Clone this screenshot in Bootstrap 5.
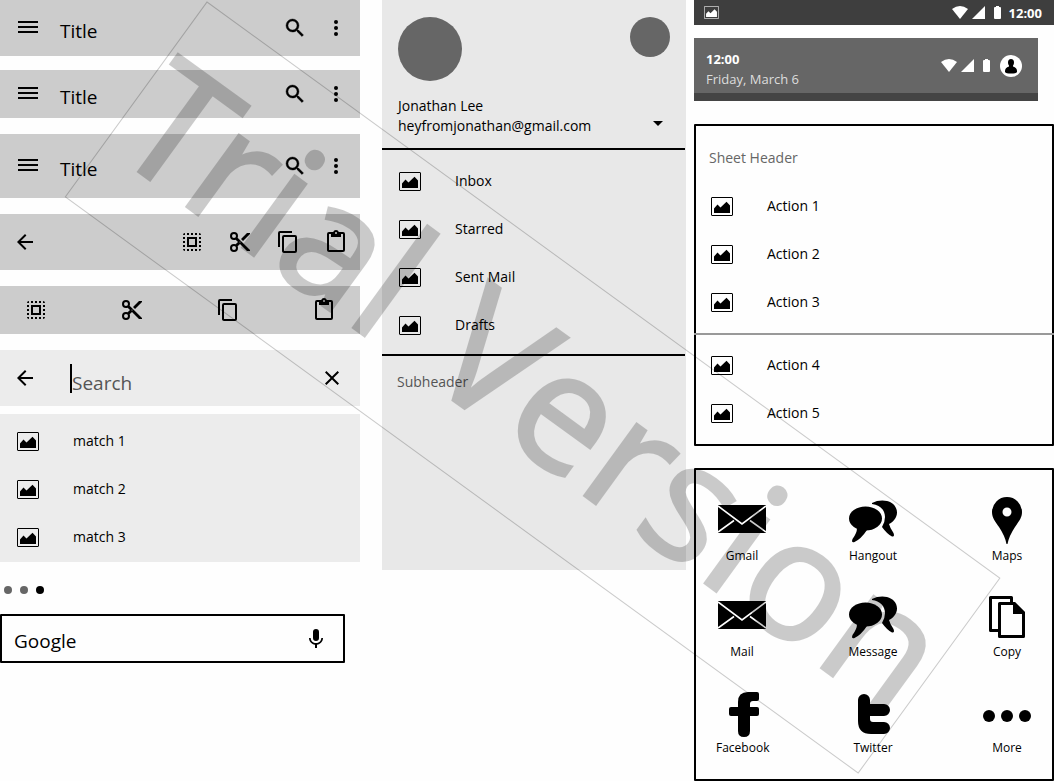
<!DOCTYPE html>
<html lang="en">
<head>
<meta charset="utf-8">
<meta name="viewport" content="width=device-width, initial-scale=1">
<title>Mobile components</title>
<link href="https://cdn.jsdelivr.net/npm/bootstrap@5.3.0/dist/css/bootstrap.min.css" rel="stylesheet">
<style>
  body { font-family: "Open Sans", "Noto Sans", sans-serif; font-size: 14px; line-height: 20px; color: #000; background: #fefefe; overflow-x: hidden; }
  svg { display: block; flex: none; fill: currentColor; }
  a { color: inherit; text-decoration: none; }
  .board { display: grid; grid-template-columns: 360fr 22px 304fr 8px 360fr; align-items: start; }
  .pane-bars { grid-column: 1; }
  .pane-drawer { grid-column: 3; background: #e8e8e8; min-height: 570px; }
  .pane-sheets { grid-column: 5; }
  .tool { background: none; border: 0; padding: 0; color: #000; }
  .bar { background: #ccc; height: 56px; padding: 0 12px 0 16px; margin-bottom: 16px; }
  .bar-short { height: 48px; }
  .bar-tall { height: 64px; }
  .bar-first { margin-bottom: 14px; }
  .bar-edit { padding-left: 13px; }
  .bar-title { font-size: 19px; line-height: 28px; padding-top: 6px; margin: 0 0 0 20px; font-weight: 400; }
  .tools { gap: 17px; }
  .bar-search { background: #ececec; padding: 0 16px 0 13px; margin-bottom: 8px; }
  .caret-line { width: 2px; height: 29px; background: #000; margin-left: 33px; }
  .field { border: 0; background: none; outline: 0; min-width: 0; font-size: 19px; line-height: 28px; padding: 10px 0 0; color: #000; }
  .field::placeholder { color: #555; opacity: 1; }
  .field-google::placeholder { color: #000; }
  .rows { margin: 0; }
  .rows a { display: flex; align-items: center; height: 48px; padding-left: 17px; gap: 34px; }
  .rows svg { margin-top: 1px; }
  .matches { background: #ececec; padding: 3px 0 1px; }
  .folders { padding: 7px 0 5px; }
  .dot { width: 8px; height: 8px; border-radius: 50%; background: #666; border: 0; padding: 0; }
  .dot-on { background: #000; }
  .pager { gap: 8px; padding: 24px 4px 20px; }
  .google { border: 2px solid #000; border-radius: 1px; margin-right: 15px; height: 49px; padding: 0 15px 0 12px; }
  .google .field { padding-top: 4px; }
  .avatar { width: 64px; height: 64px; border-radius: 50%; background: #666; }
  .avatar-small { width: 40px; height: 40px; }
  .account { padding: 17px 16px 12px; }
  .account-text { padding-top: 15px; }
  .rule { height: 2px; background: #000; margin-right: 1px; }
  .subhead { color: #555; padding: 16px 15px; margin: 0; }
  .status { background: #3e3e3e; color: #fff; height: 25px; padding: 0 12px 0 10px; font-size: 13px; }
  .signals { gap: 4px; }
  .signals .cell-battery { margin-left: 5px; }
  .shade { background: #666; color: #fff; border-bottom: 8px solid #444; height: 63px; margin: 13px 16px 23px 0; padding: 0 16px 0 12px; gap: 10px; font-size: 13px; }
  .shade-text { padding-top: 6px; }
  .shade-date { color: #ddd; }
  .sheet { border: 2px solid #000; border-radius: 1px; padding-bottom: 7px; }
  .sheet-head { color: #666; font-size: 14px; font-weight: 400; line-height: 20px; padding: 22px 13px 14px; margin: 0; }
  .sheet .rows a { padding-left: 15px; }
  .sheet-rule { height: 2px; background: #999; margin: 7px -2px 6px; }
  .apps { border: 2px solid #000; border-radius: 1px; margin-top: 22px; padding: 25px 0 23px 20px; display: grid; grid-template-columns: 131fr 134fr 71fr; row-gap: 27px; font-size: 12px; line-height: 16px; }
  .app-tile { width: 52px; text-align: center; white-space: nowrap; }
  .app-tile svg { margin: 0 2px 3px; }
  .stamp { position: absolute; left: 0; top: 0; pointer-events: none; opacity: .2; font-family: "Noto Sans", sans-serif; }
</style>
</head>
<body>
<svg width="0" height="0" class="position-absolute" aria-hidden="true">
  <symbol id="menu" viewBox="0 0 24 24"><path d="M2 5h20v2H2zM2 10h20v2H2zM2 15h20v2H2z"/></symbol>
  <symbol id="search" viewBox="0 0 24 24"><path d="M15.500 14h-.79l-.28-.27A6.47 6.47 0 0 0 16 9.500 6.500 6.500 0 1 0 9.500 16c1.610 0 3.090-.59 4.230-1.570l.27.28v.79l5 4.990L20.490 19zm-6 0a4.500 4.500 0 1 1 0-9 4.500 4.500 0 0 1 0 9z" stroke="currentColor" stroke-width=".4"/></symbol>
  <symbol id="more" viewBox="0 0 24 24"><circle cx="12" cy="6" r="2"/><circle cx="12" cy="12" r="2"/><circle cx="12" cy="18" r="2"/></symbol>
  <symbol id="back" viewBox="0 0 24 24"><path d="M20 11H7.830l5.590-5.590L12 4l-8 8 8 8 1.410-1.410L7.830 13H20z"/></symbol>
  <symbol id="close" viewBox="0 0 24 24"><path d="M19 6.410L17.590 5 12 10.590 6.410 5 5 6.410 10.590 12 5 17.590 6.410 19 12 13.410 17.590 19 19 17.590 13.410 12z"/></symbol>
  <symbol id="all" viewBox="0 0 24 24"><path d="M3 5h2V3a2 2 0 0 0-2 2zm0 8h2v-2H3zm4 8h2v-2H7zM3 9h2V7H3zm10-6h-2v2h2zm6 0v2h2a2 2 0 0 0-2-2zM5 21v-2H3c0 1.100.9 2 2 2zm-2-4h2v-2H3zM9 3H7v2h2zm2 18h2v-2h-2zm8-8h2v-2h-2zm0 8a2 2 0 0 0 2-2h-2zm0-12h2V7h-2zm0 8h2v-2h-2zm-4 4h2v-2h-2zm0-16h2V3h-2zM7 17h10V7H7zm2-8h6v6H9z"/></symbol>
  <symbol id="cut" viewBox="0 0 24 24"><path d="M9.640 7.640c.23-.5.36-1.050.36-1.640a4 4 0 1 0-4 4c.59 0 1.140-.13 1.640-.36L10 12l-2.360 2.360A3.950 3.950 0 0 0 6 14a4 4 0 1 0 4 4c0-.59-.13-1.140-.36-1.640L12 14l7 7h3v-1zM6 8a2 2 0 1 1 0-4 2 2 0 0 1 0 4zm0 12a2 2 0 1 1 0-4 2 2 0 0 1 0 4zm6-7.500a.5.5 0 1 1 0-1 .5.5 0 0 1 0 1zM19 3l-6 6 2 2 7-7V3z"/></symbol>
  <symbol id="copy" viewBox="0 0 24 24"><path d="M16 1H4a2 2 0 0 0-2 2v14h2V3h12zm3 4H8a2 2 0 0 0-2 2v14c0 1.100.9 2 2 2h11a2 2 0 0 0 2-2V7a2 2 0 0 0-2-2zm0 16H8V7h11z"/></symbol>
  <symbol id="paste" viewBox="0 0 24 24"><path d="M19 2h-4.180a3 3 0 0 0-5.640 0H5a2 2 0 0 0-2 2v16c0 1.100.9 2 2 2h14a2 2 0 0 0 2-2V4a2 2 0 0 0-2-2zm-7 0a1 1 0 1 1 0 2 1 1 0 0 1 0-2zm7 18H5V4h2v3h10V4h2z"/></symbol>
  <symbol id="mic" viewBox="0 0 24 24"><path d="M12 14a3 3 0 0 0 3-3V5a3 3 0 0 0-6 0v6a3 3 0 0 0 3 3zm5.300-3c0 3-2.540 5.100-5.300 5.100S6.700 14 6.700 11H5c0 3.410 2.720 6.230 6 6.720V21h2v-3.280c3.280-.48 6-3.300 6-6.720z"/></symbol>
  <symbol id="photo" viewBox="0 0 22 19"><rect x=".5" y=".5" width="21" height="18" rx=".5" fill="none" stroke="currentColor"/><path d="M3 16v-4.500L6.500 7.500 9.500 10.500 15.500 4.700 19 8.500V16z"/></symbol>
  <symbol id="wifi" viewBox="0 0 16 13"><path d="M0 3Q8-3 16 3L8 13z"/></symbol>
  <symbol id="cell" viewBox="0 0 13 13"><path d="M0 13L13 0v13z"/></symbol>
  <symbol id="battery" viewBox="0 0 7 13"><path d="M2 0h3v1h1q1 0 1 1v10q0 1-1 1H1q-1 0-1-1V2q0-1 1-1h1z"/></symbol>
  <symbol id="person" viewBox="0 0 22 22"><circle cx="11" cy="11" r="11" fill="#fff"/><g fill="#000"><ellipse cx="11" cy="7.500" rx="3" ry="3.500"/><path d="M9 10h4v1.500q4 1 4 4.500v1q-1 1.500-6 1.500T5 17v-1q0-3.500 4-4.500z"/></g></symbol>
  <symbol id="mail" viewBox="0 0 48 50"><path d="M0 10h48v28H0z"/><path d="M0 11L24 29 48 11M0 37L16 25.500M48 37L32 25.500" fill="none" stroke="#fefefe" stroke-width="1.600"/></symbol>
  <symbol id="chat" viewBox="0 0 48 50"><ellipse cx="16.500" cy="23.500" rx="16.500" ry="12"/><path d="M8 33Q8 38 3.500 44 2 48 5.500 47 12 44 18 35z"/><path d="M23 8Q30 4.500 38 6C44 7.500 48 12 48 17.500 48 23 44 27 40 29Q41 33 44.500 38 46 42 43 41.500 38 39 33 32 36 27 36 22C36 15 31 10 23 9z"/></symbol>
  <symbol id="pin" viewBox="0 0 48 50"><path fill-rule="evenodd" d="M24 2a15 15 0 0 1 15 15c0 6-3 9-7 15Q26 41 24.500 49h-1Q22 41 16 32C12 26 9 23 9 17A15 15 0 0 1 24 2zm0 10.500a4.500 4.500 0 1 0 0 9 4.500 4.500 0 0 0 0-9z"/></symbol>
  <symbol id="pages" viewBox="0 0 48 50"><g fill="none" stroke="currentColor" stroke-width="3" stroke-linejoin="round"><path d="M15 39.500H7.500v-33h21V11M16.500 12.500H31L40.500 22v23.500h-24z"/></g><path d="M30 11h2L42 21v2H30z"/></symbol>
  <symbol id="fb" viewBox="0 0 48 50"><path d="M39 5q2 0 2 2v5q0 2-2 2h-4q-3 0-3 3v3h7q2 0 2 2v5q0 2-2 2h-7v15q0 6-6 6t-6-6V29h-7q-2 0-2-2v-5q0-2 2-2h7v-5Q20 5 30 5z"/></symbol>
  <symbol id="tw" viewBox="0 0 48 50"><path d="M9 13a6 6 0 0 1 12 0v4h14a6 6 0 0 1 0 12H21v3q0 3 3 3h11a6 6 0 0 1 0 12H22Q9 47 9 34z"/></symbol>
  <symbol id="dots" viewBox="0 0 48 50"><circle cx="6" cy="29" r="6"/><circle cx="24" cy="29" r="6"/><circle cx="42" cy="29" r="6"/></symbol>
</svg>

<main class="board">
  <section class="pane-bars">
    <header class="bar bar-first d-flex align-items-center">
      <button class="tool" aria-label="Menu"><svg width="24" height="24"><use href="#menu"/></svg></button>
      <h1 class="bar-title">Title</h1>
      <div class="tools d-flex ms-auto">
        <button class="tool" aria-label="Search"><svg width="24" height="24"><use href="#search"/></svg></button>
        <button class="tool" aria-label="More"><svg width="24" height="24"><use href="#more"/></svg></button>
      </div>
    </header>
    <header class="bar bar-short d-flex align-items-center">
      <button class="tool" aria-label="Menu"><svg width="24" height="24"><use href="#menu"/></svg></button>
      <h1 class="bar-title">Title</h1>
      <div class="tools d-flex ms-auto">
        <button class="tool" aria-label="Search"><svg width="24" height="24"><use href="#search"/></svg></button>
        <button class="tool" aria-label="More"><svg width="24" height="24"><use href="#more"/></svg></button>
      </div>
    </header>
    <header class="bar bar-tall d-flex align-items-center">
      <button class="tool" aria-label="Menu"><svg width="24" height="24"><use href="#menu"/></svg></button>
      <h1 class="bar-title">Title</h1>
      <div class="tools d-flex ms-auto">
        <button class="tool" aria-label="Search"><svg width="24" height="24"><use href="#search"/></svg></button>
        <button class="tool" aria-label="More"><svg width="24" height="24"><use href="#more"/></svg></button>
      </div>
    </header>
    <div class="bar bar-edit d-flex align-items-center gap-4">
      <button class="tool me-auto" aria-label="Back"><svg width="24" height="24"><use href="#back"/></svg></button>
      <button class="tool" aria-label="Select all"><svg width="24" height="24"><use href="#all"/></svg></button>
      <button class="tool" aria-label="Cut"><svg width="24" height="24"><use href="#cut"/></svg></button>
      <button class="tool" aria-label="Copy"><svg width="24" height="24"><use href="#copy"/></svg></button>
      <button class="tool" aria-label="Paste"><svg width="24" height="24"><use href="#paste"/></svg></button>
    </div>
    <div class="bar bar-short d-flex align-items-center justify-content-between px-4">
      <button class="tool" aria-label="Select all"><svg width="24" height="24"><use href="#all"/></svg></button>
      <button class="tool" aria-label="Cut"><svg width="24" height="24"><use href="#cut"/></svg></button>
      <button class="tool" aria-label="Copy"><svg width="24" height="24"><use href="#copy"/></svg></button>
      <button class="tool" aria-label="Paste"><svg width="24" height="24"><use href="#paste"/></svg></button>
    </div>
    <form class="bar bar-search d-flex align-items-center">
      <button type="button" class="tool" aria-label="Back"><svg width="24" height="24"><use href="#back"/></svg></button>
      <span class="caret-line"></span>
      <input class="field flex-grow-1" type="text" placeholder="Search" aria-label="Search">
      <button type="button" class="tool" aria-label="Clear"><svg width="24" height="24"><use href="#close"/></svg></button>
    </form>
    <ul class="rows matches list-unstyled">
      <li><a href="#"><svg width="22" height="19"><use href="#photo"/></svg>match 1</a></li>
      <li><a href="#"><svg width="22" height="19"><use href="#photo"/></svg>match 2</a></li>
      <li><a href="#"><svg width="22" height="19"><use href="#photo"/></svg>match 3</a></li>
    </ul>
    <div class="pager d-flex">
      <button class="dot" aria-label="Page 1"></button>
      <button class="dot" aria-label="Page 2"></button>
      <button class="dot dot-on" aria-label="Page 3"></button>
    </div>
    <form class="google d-flex align-items-center">
      <input class="field field-google flex-grow-1" type="text" placeholder="Google" aria-label="Google">
      <button type="button" class="tool" aria-label="Voice search"><svg width="24" height="24"><use href="#mic"/></svg></button>
    </form>
  </section>

  <nav class="pane-drawer">
    <div class="account">
      <div class="d-flex justify-content-between">
        <div class="avatar"></div>
        <div class="avatar avatar-small"></div>
      </div>
      <div class="account-text d-flex justify-content-between align-items-end">
        <div>Jonathan Lee<br>heyfromjonathan@gmail.com</div>
        <button class="tool" aria-label="Switch account"><svg width="24" height="24"><path d="M7 9h10l-5 5z"/></svg></button>
      </div>
    </div>
    <div class="rule"></div>
    <ul class="rows folders list-unstyled">
      <li><a href="#"><svg width="22" height="19"><use href="#photo"/></svg>Inbox</a></li>
      <li><a href="#"><svg width="22" height="19"><use href="#photo"/></svg>Starred</a></li>
      <li><a href="#"><svg width="22" height="19"><use href="#photo"/></svg>Sent Mail</a></li>
      <li><a href="#"><svg width="22" height="19"><use href="#photo"/></svg>Drafts</a></li>
    </ul>
    <div class="rule"></div>
    <p class="subhead">Subheader</p>
  </nav>

  <section class="pane-sheets">
    <div class="status d-flex align-items-center">
      <svg width="15" height="13" class="me-auto"><use href="#photo"/></svg>
      <div class="signals d-flex">
        <svg width="16" height="13"><use href="#wifi"/></svg>
        <svg width="13" height="13"><use href="#cell"/></svg>
        <svg width="7" height="13" class="cell-battery"><use href="#battery"/></svg>
      </div>
      <b class="ms-2">12:00</b>
    </div>
    <div class="shade d-flex align-items-center">
      <div class="shade-text me-auto"><b>12:00</b><br><span class="shade-date">Friday, March 6</span></div>
      <div class="signals d-flex">
        <svg width="16" height="13"><use href="#wifi"/></svg>
        <svg width="13" height="13"><use href="#cell"/></svg>
        <svg width="7" height="13" class="cell-battery"><use href="#battery"/></svg>
      </div>
      <svg width="22" height="22"><use href="#person"/></svg>
    </div>
    <div class="sheet">
      <h2 class="sheet-head">Sheet Header</h2>
      <ul class="rows list-unstyled">
        <li><a href="#"><svg width="22" height="19"><use href="#photo"/></svg>Action 1</a></li>
        <li><a href="#"><svg width="22" height="19"><use href="#photo"/></svg>Action 2</a></li>
        <li><a href="#"><svg width="22" height="19"><use href="#photo"/></svg>Action 3</a></li>
      </ul>
      <div class="sheet-rule"></div>
      <ul class="rows list-unstyled">
        <li><a href="#"><svg width="22" height="19"><use href="#photo"/></svg>Action 4</a></li>
        <li><a href="#"><svg width="22" height="19"><use href="#photo"/></svg>Action 5</a></li>
      </ul>
    </div>
    <div class="apps">
      <a class="app-tile" href="#"><svg width="48" height="50"><use href="#mail"/></svg>Gmail</a>
      <a class="app-tile" href="#"><svg width="48" height="50"><use href="#chat"/></svg>Hangout</a>
      <a class="app-tile" href="#"><svg width="48" height="50"><use href="#pin"/></svg>Maps</a>
      <a class="app-tile" href="#"><svg width="48" height="50"><use href="#mail"/></svg>Mail</a>
      <a class="app-tile" href="#"><svg width="48" height="50"><use href="#chat"/></svg>Message</a>
      <a class="app-tile" href="#"><svg width="48" height="50"><use href="#pages"/></svg>Copy</a>
      <a class="app-tile" href="#"><svg width="48" height="50"><use href="#fb"/></svg>Facebook</a>
      <a class="app-tile" href="#"><svg width="48" height="50"><use href="#tw"/></svg>Twitter</a>
      <a class="app-tile" href="#"><svg width="48" height="50"><use href="#dots"/></svg>More</a>
    </div>
  </section>
</main>

<svg class="stamp" width="1054" height="781" viewBox="0 0 1054 781">
  <g transform="translate(207 2) rotate(36)">
    <rect width="980" height="241" fill="none" stroke="#000"/>
    <g font-size="167" stroke="#000" stroke-width="2">
      <text x="5" y="178">Trial</text>
      <text x="390" y="178">Version</text>
    </g>
  </g>
</svg>
<script src="https://cdn.jsdelivr.net/npm/bootstrap@5.3.0/dist/js/bootstrap.bundle.min.js"></script>
</body>
</html>
